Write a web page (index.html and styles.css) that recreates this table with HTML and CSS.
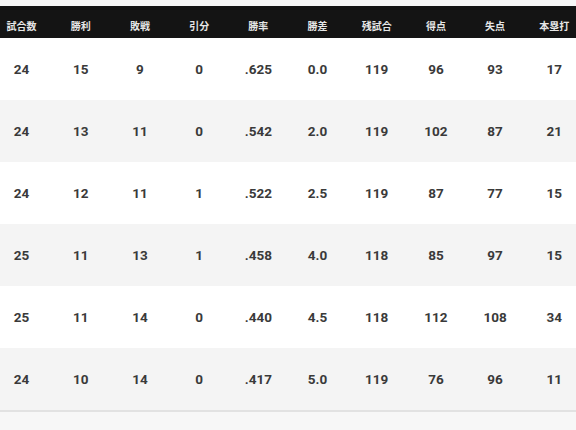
FILE: index.html
```html
<!DOCTYPE html>
<html lang="ja">
<head>
<meta charset="utf-8">
<link rel="stylesheet" href="styles.css">
</head>
<body>
<div class="page">
  <table class="standings">
    <thead>
      <tr>
        <th>試合数</th><th>勝利</th><th>敗戦</th><th>引分</th><th>勝率</th><th>勝差</th><th>残試合</th><th>得点</th><th>失点</th><th>本塁打</th>
      </tr>
    </thead>
    <tbody>
      <tr><td>24</td><td>15</td><td>9</td><td>0</td><td>.625</td><td>0.0</td><td>119</td><td>96</td><td>93</td><td>17</td></tr>
      <tr><td>24</td><td>13</td><td>11</td><td>0</td><td>.542</td><td>2.0</td><td>119</td><td>102</td><td>87</td><td>21</td></tr>
      <tr><td>24</td><td>12</td><td>11</td><td>1</td><td>.522</td><td>2.5</td><td>119</td><td>87</td><td>77</td><td>15</td></tr>
      <tr><td>25</td><td>11</td><td>13</td><td>1</td><td>.458</td><td>4.0</td><td>118</td><td>85</td><td>97</td><td>15</td></tr>
      <tr><td>25</td><td>11</td><td>14</td><td>0</td><td>.440</td><td>4.5</td><td>118</td><td>112</td><td>108</td><td>34</td></tr>
      <tr><td>24</td><td>10</td><td>14</td><td>0</td><td>.417</td><td>5.0</td><td>119</td><td>76</td><td>96</td><td>11</td></tr>
    </tbody>
  </table>
</div>
</body>
</html>
```
FILE: styles.css
```css
html, body {
  margin: 0;
  padding: 0;
  background: #f7f7f7;
  overflow: hidden;
}
.page {
  width: 576px;
  height: 430px;
  overflow: hidden;
  padding-top: 6px;
  box-sizing: border-box;
}
.standings {
  width: 592px;
  margin-left: -8px;
  border-collapse: collapse;
  table-layout: fixed;
  font-family: Roboto, "Liberation Sans", sans-serif;
}
.standings th {
  background: #141414;
  color: #e6e6e6;
  font-family: "Noto Sans CJK JP", sans-serif;
  font-weight: 700;
  font-size: 10px;
  height: 25px;
  padding: 7px 0 0;
  text-align: center;
  vertical-align: middle;
}
.standings td {
  height: 62px;
  padding: 0;
  text-align: center;
  vertical-align: middle;
  font-size: 13.5px;
  font-weight: 700;
  color: #3a3a3a;
}
.standings tbody tr:nth-child(odd) td {
  background: #ffffff;
}
.standings tbody tr:nth-child(even) td {
  background: #f4f4f4;
}
.standings tbody tr:last-child td {
  border-bottom: 2px solid #e2e2e2;
}
```
